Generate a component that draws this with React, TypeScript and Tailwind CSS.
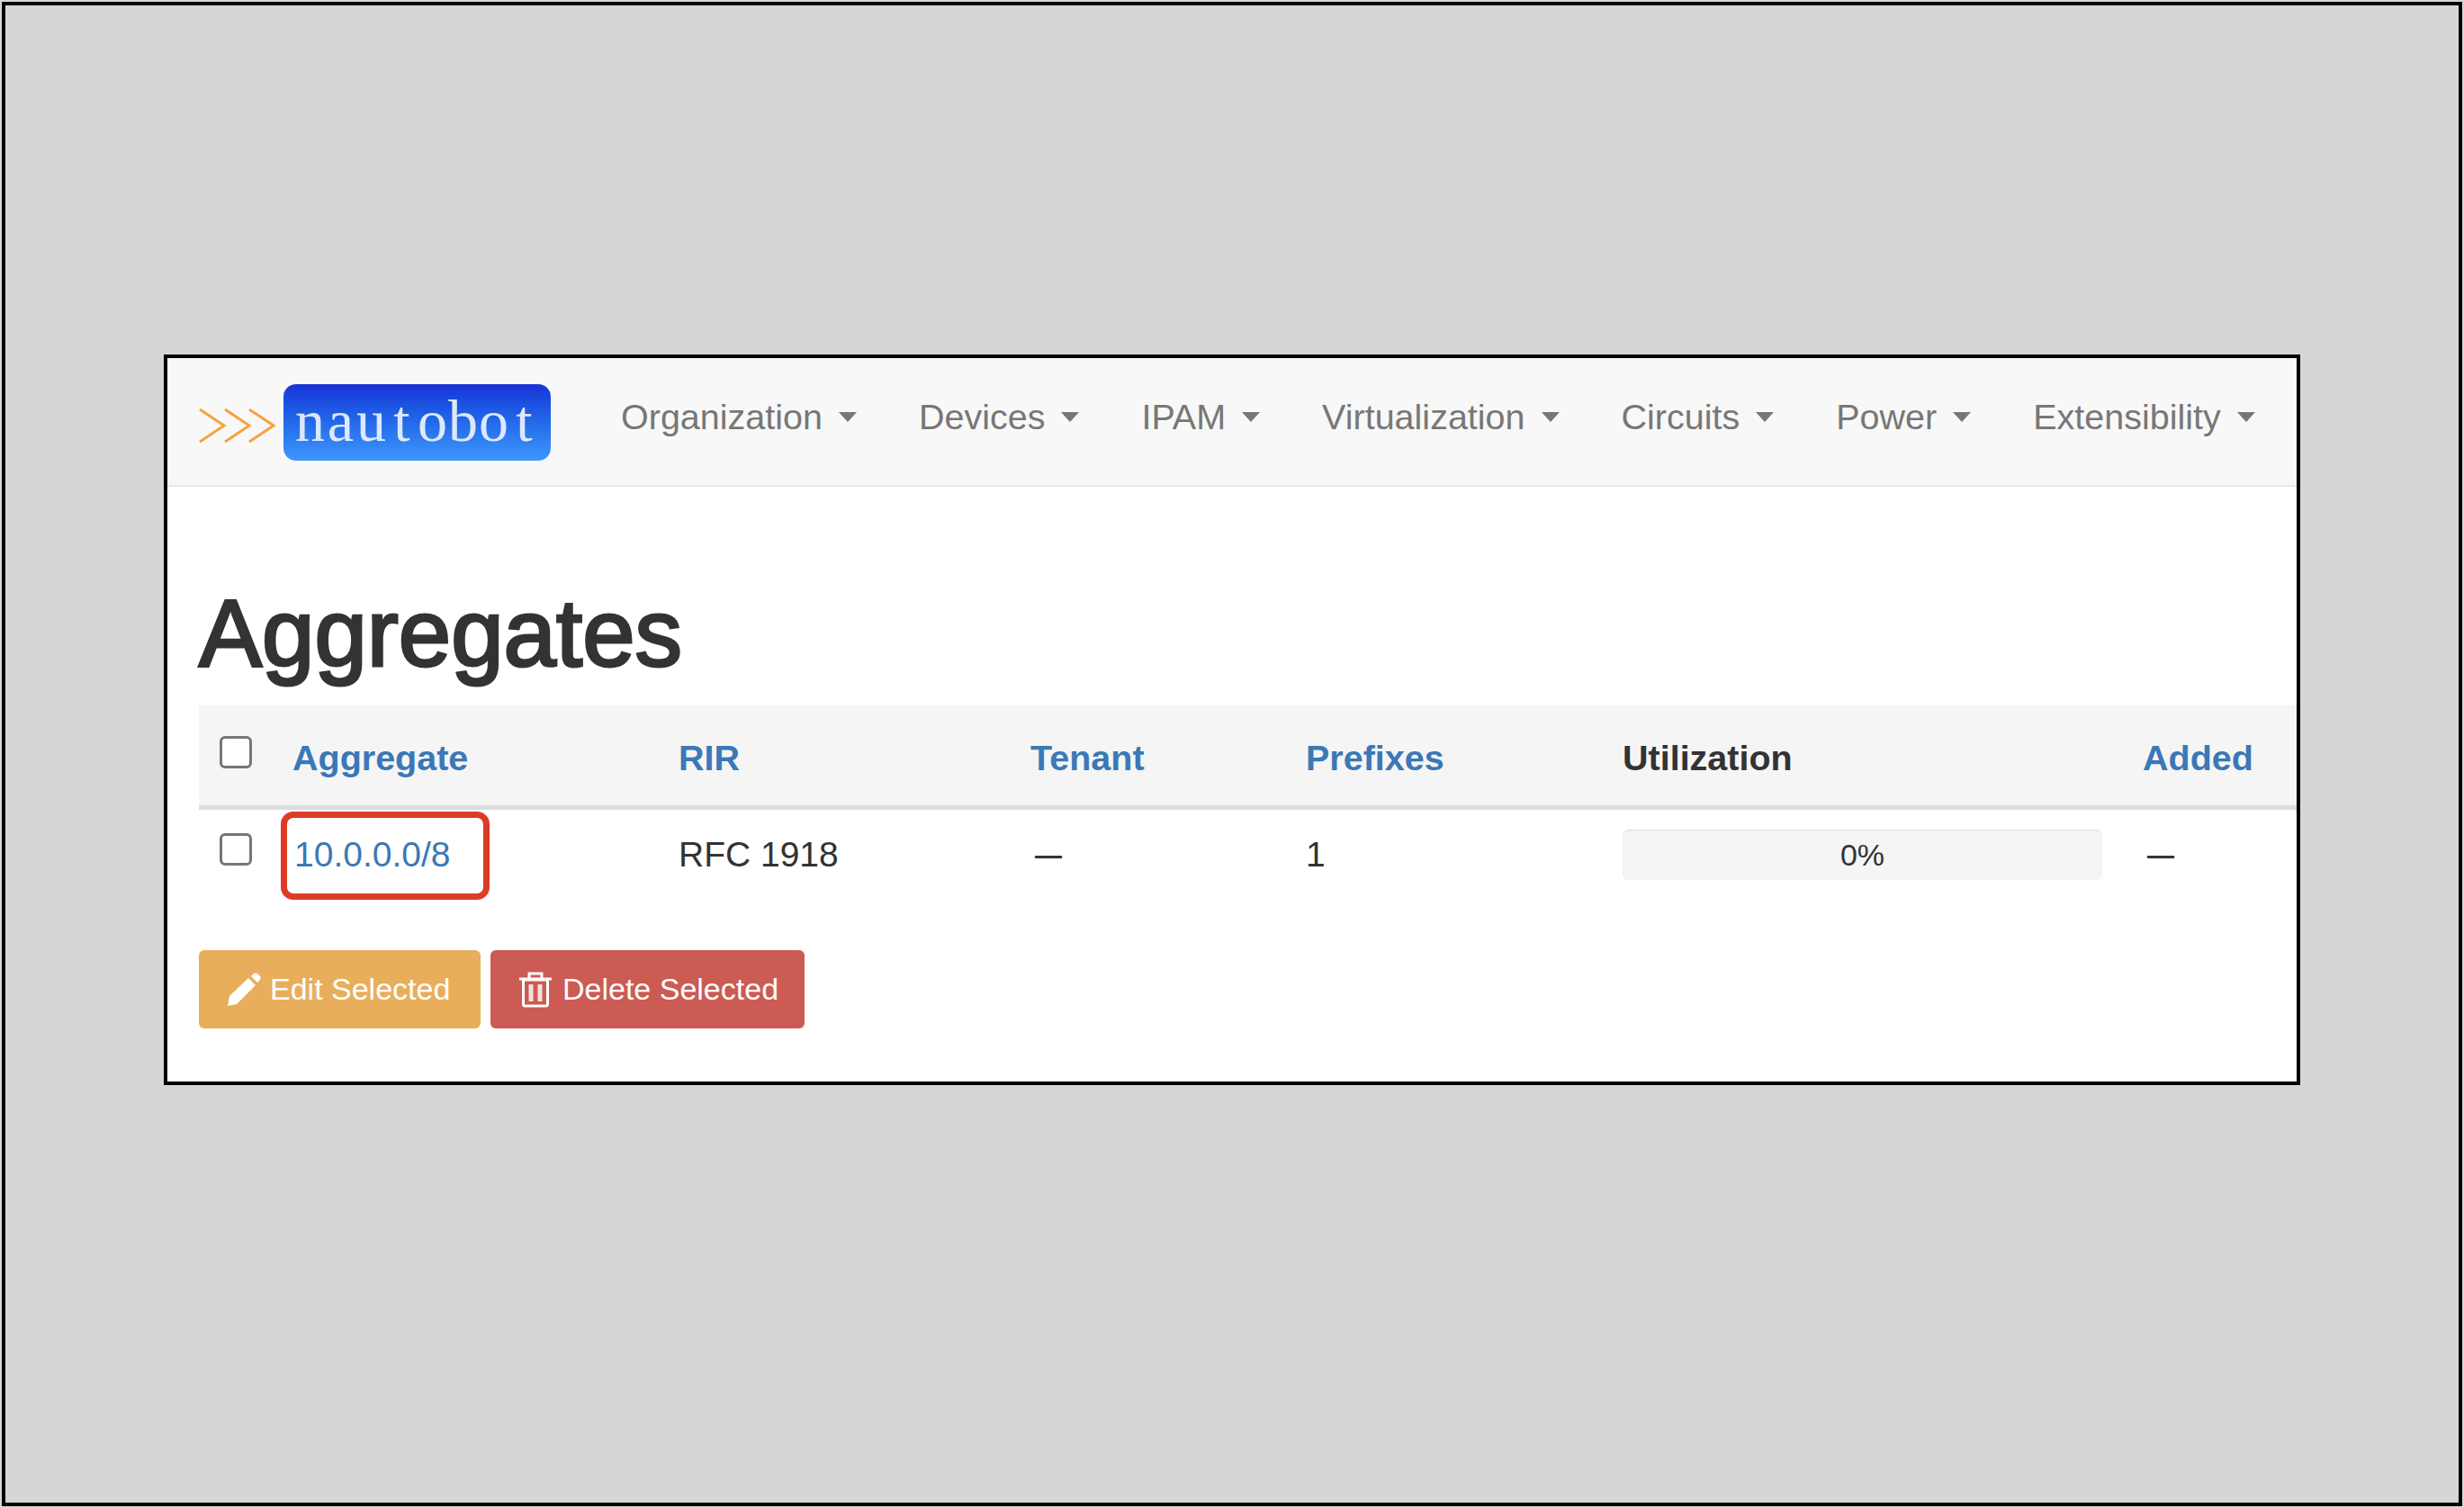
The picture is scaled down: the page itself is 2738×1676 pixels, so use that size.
const navItems = ['Organization', 'Devices', 'IPAM', 'Virtualization', 'Circuits', 'Power', 'Extensibility'];

const Checkbox = () => (
  <span className="block w-9 h-9 bg-white border-[3px] border-[#767676] rounded-[6px]" />
);

const Chevrons = () => (
  <svg width="86" height="38" viewBox="0 0 86 38" fill="none" stroke="#f5a33e" strokeWidth="3">
    <path d="M1 1 L28 19 L1 37" />
    <path d="M29 1 L56 19 L29 37" />
    <path d="M56 1 L83 19 L56 37" />
  </svg>
);

const PencilIcon = () => (
  <svg width="38" height="38" viewBox="0 0 38 38" fill="white">
    <path d="M1 37 L3 26 L24 6 L32 14 L11 35 Z" />
    <path d="M27 4 L30 1 Q32 0 34 1 L37 4 Q38 6 37 8 L34 11 Z" />
  </svg>
);

const TrashIcon = () => (
  <svg width="36" height="40" viewBox="0 0 36 40" fill="none">
    <path d="M0 8 H36 M11 7 V2 H25 V7" stroke="white" strokeWidth="3" />
    <rect x="4.5" y="9" width="27" height="29" rx="2" stroke="white" strokeWidth="3" />
    <path d="M13 14 V33 M23 14 V33" stroke="white" strokeOpacity="0.8" strokeWidth="5" />
  </svg>
);

export default function App() {
  return (
    <div className="w-[2738px] h-[1676px] p-0.5 bg-[#d6d6d6] font-['Liberation_Sans',Arial,sans-serif] overflow-hidden">
      <div className="h-full border-4 border-black pl-[176px] pt-[388px]">
        <div className="w-[2374px] h-[812px] bg-white border-4 border-black">
          <nav className="h-[143px] bg-[#f8f8f8] border-b-2 border-[#e7e7e7] flex items-center pl-[35px]">
            <div className="flex items-center gap-2 mt-[1px]">
              <div className="mt-[8px]">
                <Chevrons />
              </div>
              <div className="w-[297px] h-[85px] pb-[2px] rounded-[14px] bg-gradient-to-b from-[#1a32d6] to-[#3f97fc] flex items-center justify-center text-[66px] leading-none text-[#dce8fc] font-['Liberation_Serif',serif]">
                {'nautobot'.split('').map((letter, i) => (
                  <span key={i} className="w-[34px] text-center">{letter}</span>
                ))}
              </div>
            </div>
            <ul className="flex items-center gap-[69px] ml-[78px] mt-[-10px] text-[39.5px] leading-none text-[#777]">
              {navItems.map(item => (
                <li key={item} className="flex items-center gap-[18px]">
                  <span>{item}</span>
                  <span className="w-0 h-0 border-x-[10px] border-x-transparent border-t-[11px] border-t-[#777]" />
                </li>
              ))}
            </ul>
          </nav>

          <div className="pl-[35px]">
            <h1 className="pt-[103px] h-[243px] text-[105px] leading-[120px] text-[#333] [-webkit-text-stroke:3px_#333]">
              Aggregates
            </h1>

            <table className="w-full table-fixed border-collapse text-[39px] text-[#333]">
              <colgroup>
                <col className="w-[104px]" />
                <col className="w-[429px]" />
                <col className="w-[391px]" />
                <col className="w-[306px]" />
                <col className="w-[352px]" />
                <col className="w-[578px]" />
                <col />
              </colgroup>
              <thead>
                <tr className="h-[113px] bg-[#f5f5f5] border-b-[5px] border-[#ddd] text-left text-[39.5px] font-bold">
                  <th className="pl-[23px]">
                    <div className="mb-[6px]"><Checkbox /></div>
                  </th>
                  <th className="pt-[7px] text-[#3b78b6]">Aggregate</th>
                  <th className="pt-[7px] text-[#3b78b6]">RIR</th>
                  <th className="pt-[7px] text-[#3b78b6]">Tenant</th>
                  <th className="pt-[7px] text-[#3b78b6]">Prefixes</th>
                  <th className="pt-[7px]">Utilization</th>
                  <th className="pt-[7px] text-[#3b78b6]">Added</th>
                </tr>
              </thead>
              <tbody>
                <tr className="h-[104px]">
                  <td className="pl-[23px]">
                    <div className="mb-[12px]"><Checkbox /></div>
                  </td>
                  <td className="relative text-[#3b78b6]">
                    <span className="pl-[2px]">10.0.0.0/8</span>
                    <span className="absolute left-[-13px] top-[2px] w-[232px] h-[98px] border-[7px] border-[#dc3c26] rounded-[14px]" />
                  </td>
                  <td>RFC 1918</td>
                  <td className="pb-[4px]"><span className="pl-[5px] text-[30px] font-bold">—</span></td>
                  <td>1</td>
                  <td>
                    <div className="w-[533px] h-[56px] rounded-[7px] bg-[#f5f5f5] shadow-[inset_0_1px_2px_rgba(0,0,0,0.1)] flex items-center justify-center text-[34px] leading-none">
                      0%
                    </div>
                  </td>
                  <td className="pb-[4px]"><span className="pl-[5px] text-[30px] font-bold">—</span></td>
                </tr>
              </tbody>
            </table>

            <div className="flex gap-[11px] mt-[55px]">
              <button className="w-[313px] h-[87px] rounded-[6px] bg-[#e8ae5c] text-white text-[34px] flex items-center pl-[31px] gap-[10px]">
                <PencilIcon />
                Edit Selected
              </button>
              <button className="w-[349px] h-[87px] rounded-[6px] bg-[#cb5b53] text-white text-[34px] flex items-center pl-[32px] gap-[12px]">
                <TrashIcon />
                Delete Selected
              </button>
            </div>
          </div>
        </div>
      </div>
    </div>
  );
}
